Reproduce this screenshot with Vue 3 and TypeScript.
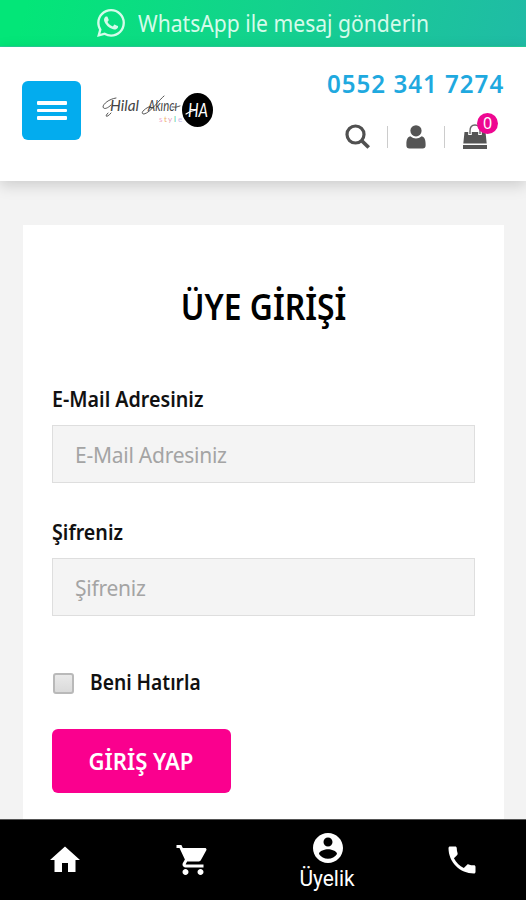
<script setup lang="ts">
import { ref } from 'vue'

const email = ref('')
const password = ref('')
const remember = ref(false)
const cartCount = ref(0)
</script>

<template>
  <div class="page">
    <a class="whatsapp">
      <svg class="wa-icon" viewBox="0 0 24 24" fill="currentColor">
        <path d="M17.472 14.382c-.297-.149-1.758-.867-2.03-.967-.273-.099-.471-.148-.67.15-.197.297-.767.966-.94 1.164-.173.199-.347.223-.644.075-.297-.15-1.255-.463-2.39-1.475-.883-.788-1.48-1.761-1.653-2.059-.173-.297-.018-.458.13-.606.134-.133.298-.347.446-.52.149-.174.198-.298.298-.497.099-.198.05-.371-.025-.52-.075-.149-.669-1.612-.916-2.207-.242-.579-.487-.5-.669-.51-.173-.008-.371-.01-.57-.01-.198 0-.52.074-.792.372-.272.297-1.04 1.016-1.04 2.479 0 1.462 1.065 2.875 1.213 3.074.149.198 2.096 3.2 5.077 4.487.709.306 1.262.489 1.694.625.712.227 1.36.195 1.871.118.571-.085 1.758-.719 2.006-1.413.248-.694.248-1.289.173-1.413-.074-.124-.272-.198-.57-.347m-5.421 7.403h-.004a9.87 9.87 0 01-5.031-1.378l-.361-.214-3.741.982.998-3.648-.235-.374a9.86 9.86 0 01-1.51-5.26c.001-5.45 4.436-9.884 9.888-9.884 2.64 0 5.122 1.03 6.988 2.898a9.825 9.825 0 012.893 6.994c-.003 5.45-4.437 9.884-9.885 9.884m8.413-18.297A11.815 11.815 0 0012.05 0C5.495 0 .16 5.335.157 11.892c0 2.096.547 4.142 1.588 5.945L.057 24l6.305-1.654a11.882 11.882 0 005.683 1.448h.005c6.554 0 11.89-5.335 11.893-11.893a11.821 11.821 0 00-3.48-8.413z" />
      </svg>
      <span class="wa-text">WhatsApp ile mesaj gönderin</span>
    </a>

    <header class="header">
      <button class="menu" type="button"><i></i><i></i><i></i></button>
      <svg class="logo" viewBox="0 0 112 40">
        <g fill="none" stroke="#444" stroke-width=".9" stroke-linecap="round">
          <path d="M14 8C7 9 1 14 1 17c1 3 5 1 8-2M9 23c-4 5-7 4-3 0M62 6c-4 3-14 17-20 18-4 0-1-5 7-8M70 17q4 1 8-1" />
        </g>
        <text class="script" x="8" y="21" textLength="29" lengthAdjust="spacingAndGlyphs">Hilal</text>
        <text class="script" x="46" y="21" textLength="29" lengthAdjust="spacingAndGlyphs">Akıncı</text>
        <text class="style-text" y="32"><tspan x="57" fill="#f0a9cf">s</tspan><tspan x="62" fill="#f0b56c">t</tspan><tspan x="66" fill="#dfa0c0">y</tspan><tspan x="72" fill="#4cc9a0">l</tspan><tspan x="76" fill="#c5b8e8">e</tspan></text>
        <ellipse cx="95.500" cy="20" rx="15.500" ry="17" fill="#000" />
        <path d="M84 24q4-3 10-4" fill="none" stroke="#fff" stroke-width="1.200" stroke-linecap="round" />
        <text class="initials" x="86" y="27" textLength="20" lengthAdjust="spacingAndGlyphs">HA</text>
      </svg>
      <div class="tools">
        <a class="phone"><span>0552 341 7274</span></a>
        <div class="icons">
          <svg class="search" viewBox="0 0 26 26" fill="none" stroke="#505050">
            <circle cx="10.500" cy="10.500" r="8.500" stroke-width="3.200" />
            <path d="M16.500 16.500l7.200 7" stroke-width="3.800" />
          </svg>
          <b></b>
          <svg class="person" viewBox="0 0 20 24" fill="#555">
            <circle cx="10" cy="5.800" r="5.600" />
            <path d="M4.200 11.200Q10 15.600 15.800 11.200C18.700 12 19.600 15 19.600 19v1.500q0 3-3 3H3.400q-3 0-3-3V19c0-4 .9-7 3.800-7.800z" />
          </svg>
          <b></b>
          <div class="bag">
            <svg viewBox="0 0 26 26">
              <path fill="#555" d="M2.500 8h21l1.200 11.500H1.300zM1 21h24v4H1z" />
              <path d="M8 11V7q0-6 5-6t5 6v4" fill="none" stroke="#fff" stroke-width="3.600" />
              <path d="M8 10V7q0-6 5-6t5 6v3" fill="none" stroke="#666" stroke-width="1.400" />
            </svg>
            <span class="count"><em>{{ cartCount }}</em></span>
          </div>
        </div>
      </div>
    </header>

    <main class="card">
      <h1><span>ÜYE GİRİŞİ</span></h1>
      <form @submit.prevent>
        <label class="lbl" for="mail"><span>E-Mail Adresiniz</span></label>
        <input id="mail" v-model="email" class="field" type="text" placeholder="E-Mail Adresiniz" />
        <label class="lbl second" for="pass"><span>Şifreniz</span></label>
        <input id="pass" v-model="password" class="field" type="password" placeholder="Şifreniz" />
        <label class="remember">
          <input v-model="remember" type="checkbox" />
          <span>Beni Hatırla</span>
        </label>
        <button class="submit" type="submit"><span>GİRİŞ YAP</span></button>
      </form>
    </main>

    <nav class="tabs">
      <a>
        <svg viewBox="0 0 24 24"><path d="M10 20v-6h4v6h5v-8h3L12 3 2 12h3v8z" /></svg>
      </a>
      <a>
        <svg viewBox="0 0 24 24"><path d="M7 18c-1.100 0-1.990.9-1.990 2S5.900 22 7 22s2-.9 2-2-.9-2-2-2zM1 2v2h2l3.600 7.590-1.350 2.450c-.16.280-.25.610-.25.960 0 1.100.9 2 2 2h12v-2H7.420c-.14 0-.25-.11-.25-.25l.03-.12.9-1.630h7.450c.75 0 1.410-.41 1.750-1.030l3.580-6.490c.08-.14.12-.31.12-.48 0-.55-.45-1-1-1H5.210l-.94-2H1zm16 16c-1.100 0-1.990.9-1.990 2s.89 2 1.990 2 2-.9 2-2-.9-2-2-2z" /></svg>
      </a>
      <a class="active">
        <svg viewBox="0 0 24 24"><path d="M12 2C6.480 2 2 6.480 2 12s4.480 10 10 10 10-4.480 10-10S17.520 2 12 2zm0 3c1.660 0 3 1.340 3 3s-1.340 3-3 3-3-1.340-3-3 1.340-3 3-3zm0 14.200c-2.500 0-4.710-1.280-6-3.220.03-1.990 4-3.080 6-3.080 1.990 0 5.970 1.090 6 3.080-1.290 1.940-3.500 3.220-6 3.220z" /></svg>
        <span>Üyelik</span>
      </a>
      <a>
        <svg viewBox="0 0 24 24"><path d="M6.620 10.790c1.440 2.830 3.760 5.140 6.590 6.590l2.200-2.200c.27-.27.67-.36 1.020-.24 1.120.37 2.330.57 3.570.57.55 0 1 .45 1 1V20c0 .55-.45 1-1 1-9.390 0-17-7.610-17-17 0-.55.45-1 1-1h3.500c.55 0 1 .45 1 1 0 1.250.2 2.450.57 3.570.11.350.03.740-.25 1.020l-2.200 2.200z" /></svg>
      </a>
    </nav>
  </div>
</template>

<style>
body {
  background: #f3f3f3;
}
</style>

<style scoped>
* {
  box-sizing: border-box;
}
.page {
  height: 900px;
  overflow: hidden;
  display: flex;
  flex-direction: column;
  background: #f3f3f3;
  font-family: "Noto Sans", "Open Sans", sans-serif;
  color: #111;
}
.page span {
  white-space: nowrap;
}
.whatsapp {
  flex: none;
  height: 47px;
  display: flex;
  align-items: center;
  padding-left: 97px;
  gap: 13px;
  color: #d5fbea;
  background: linear-gradient(105deg, #03e678 5%, #14d18e 52%, #20bba6 100%);
  border-bottom: 1px solid #26cf98;
}
.wa-icon {
  width: 28px;
  height: 28px;
  flex: none;
}
.wa-text {
  font-size: 23px;
  line-height: 44px;
  transform: scaleX(0.918);
  transform-origin: left;
}
.header {
  flex: none;
  height: 134px;
  background: #fff;
  box-shadow: 0 4px 14px rgba(0, 0, 0, 0.17);
  display: flex;
  padding: 0 22px;
}
.menu {
  width: 59px;
  height: 59px;
  margin-top: 34px;
  border: 0;
  border-radius: 6px;
  padding: 0;
  background: #03acee;
  display: flex;
  flex-direction: column;
  align-items: center;
  justify-content: center;
  gap: 4px;
}
.menu i {
  width: 30px;
  height: 3.400px;
  border-radius: 1px;
  background: #fff;
}
.logo {
  width: 112px;
  height: 40px;
  margin: 43px 0 0 21px;
}
.script {
  font: italic 400 15px Lato, sans-serif;
  fill: #444;
}
.style-text {
  font: 400 8px Lato, sans-serif;
}
.initials {
  font: italic 400 19px Lato, sans-serif;
  fill: #fff;
}
.tools {
  margin-left: auto;
  width: 178px;
  display: flex;
  flex-direction: column;
  padding-top: 20px;
}
.phone {
  height: 34px;
  line-height: 34px;
  font-size: 24.500px;
  font-weight: 600;
  color: #1fa9df;
}
.phone span {
  display: inline-block;
  margin-left: 1px;
  letter-spacing: 1px;
  transform: scaleX(0.985);
  transform-origin: left;
}
.icons {
  display: flex;
  align-items: center;
  height: 36px;
  margin-top: 18px;
  padding-left: 19px;
}
.icons b {
  width: 1px;
  height: 22px;
  background: #ccc;
}
.search {
  width: 26px;
  height: 26px;
  margin-right: 16px;
}
.person {
  width: 20px;
  height: 24px;
  margin: 0 18px;
}
.bag {
  position: relative;
  width: 26px;
  height: 26px;
  margin-left: 17px;
}
.bag svg {
  display: block;
  width: 26px;
  height: 26px;
}
.count {
  position: absolute;
  left: 15px;
  top: -11px;
  width: 21px;
  height: 21px;
  border-radius: 50%;
  background: #ee0791;
  color: #fff;
  text-align: center;
  font-size: 16px;
  line-height: 21px;
}
.count em {
  font-style: normal;
}
.card {
  flex: 1;
  min-height: 0;
  margin: 44px 22px 0 23px;
  padding: 57px 29px 0;
  background: #fff;
}
h1 {
  margin: 0;
  height: 50px;
  line-height: 50px;
  font-size: 36px;
  font-weight: 650;
  text-align: center;
  color: #000;
}
h1 span {
  display: inline-block;
  transform: scaleX(0.885);
}
form {
  display: flex;
  flex-direction: column;
  margin-top: 51px;
}
.lbl {
  height: 32px;
  line-height: 32px;
  margin-bottom: 10px;
  font-size: 21px;
  font-weight: 600;
}
.lbl.second {
  margin-top: 33px;
}
.lbl span {
  display: inline-block;
  transform-origin: left;
  transform: scaleX(0.937);
}
.field {
  height: 58px;
  border: 1px solid #dedede;
  border-radius: 0;
  background: #f4f4f4;
  padding: 2px 22px 0;
  font-family: inherit;
  font-size: 21px;
  letter-spacing: -0.250px;
  outline: 0;
}
.field::placeholder {
  color: #a4a4a4;
  opacity: 1;
}
.remember {
  display: flex;
  align-items: center;
  height: 32px;
  margin-top: 51px;
  font-size: 21px;
  font-weight: 600;
}
.remember input {
  appearance: none;
  width: 21px;
  height: 21px;
  margin: 0 16px 0 1px;
  border: 2px solid #b9b9b9;
  border-radius: 3px;
  background: linear-gradient(#e9e9e9, #dadada);
}
.remember span {
  margin-top: -2px;
  transform: scaleX(0.915);
  transform-origin: left;
}
.submit {
  width: 179px;
  height: 64px;
  margin-top: 30px;
  border: 0;
  border-radius: 6px;
  padding: 0 1px 2px 0;
  background: #fa008e;
  color: #fff;
  font-family: inherit;
  font-size: 24px;
  font-weight: 650;
}
.submit span {
  display: inline-block;
  transform: scaleX(0.92);
}
.tabs {
  flex: none;
  height: 81px;
  background: #000;
  border-top: 1px solid #555;
  display: grid;
  grid-template-columns: 129px 127px 143px 126px;
}
.tabs a {
  display: flex;
  flex-direction: column;
  align-items: center;
  justify-content: center;
  color: #fff;
}
.tabs svg {
  width: 36px;
  height: 36px;
  fill: #fff;
}
.active svg {
  margin-top: 2px;
}
.active span {
  font: 22px/26px Roboto, sans-serif;
  transform: scaleX(0.95);
}
</style>
